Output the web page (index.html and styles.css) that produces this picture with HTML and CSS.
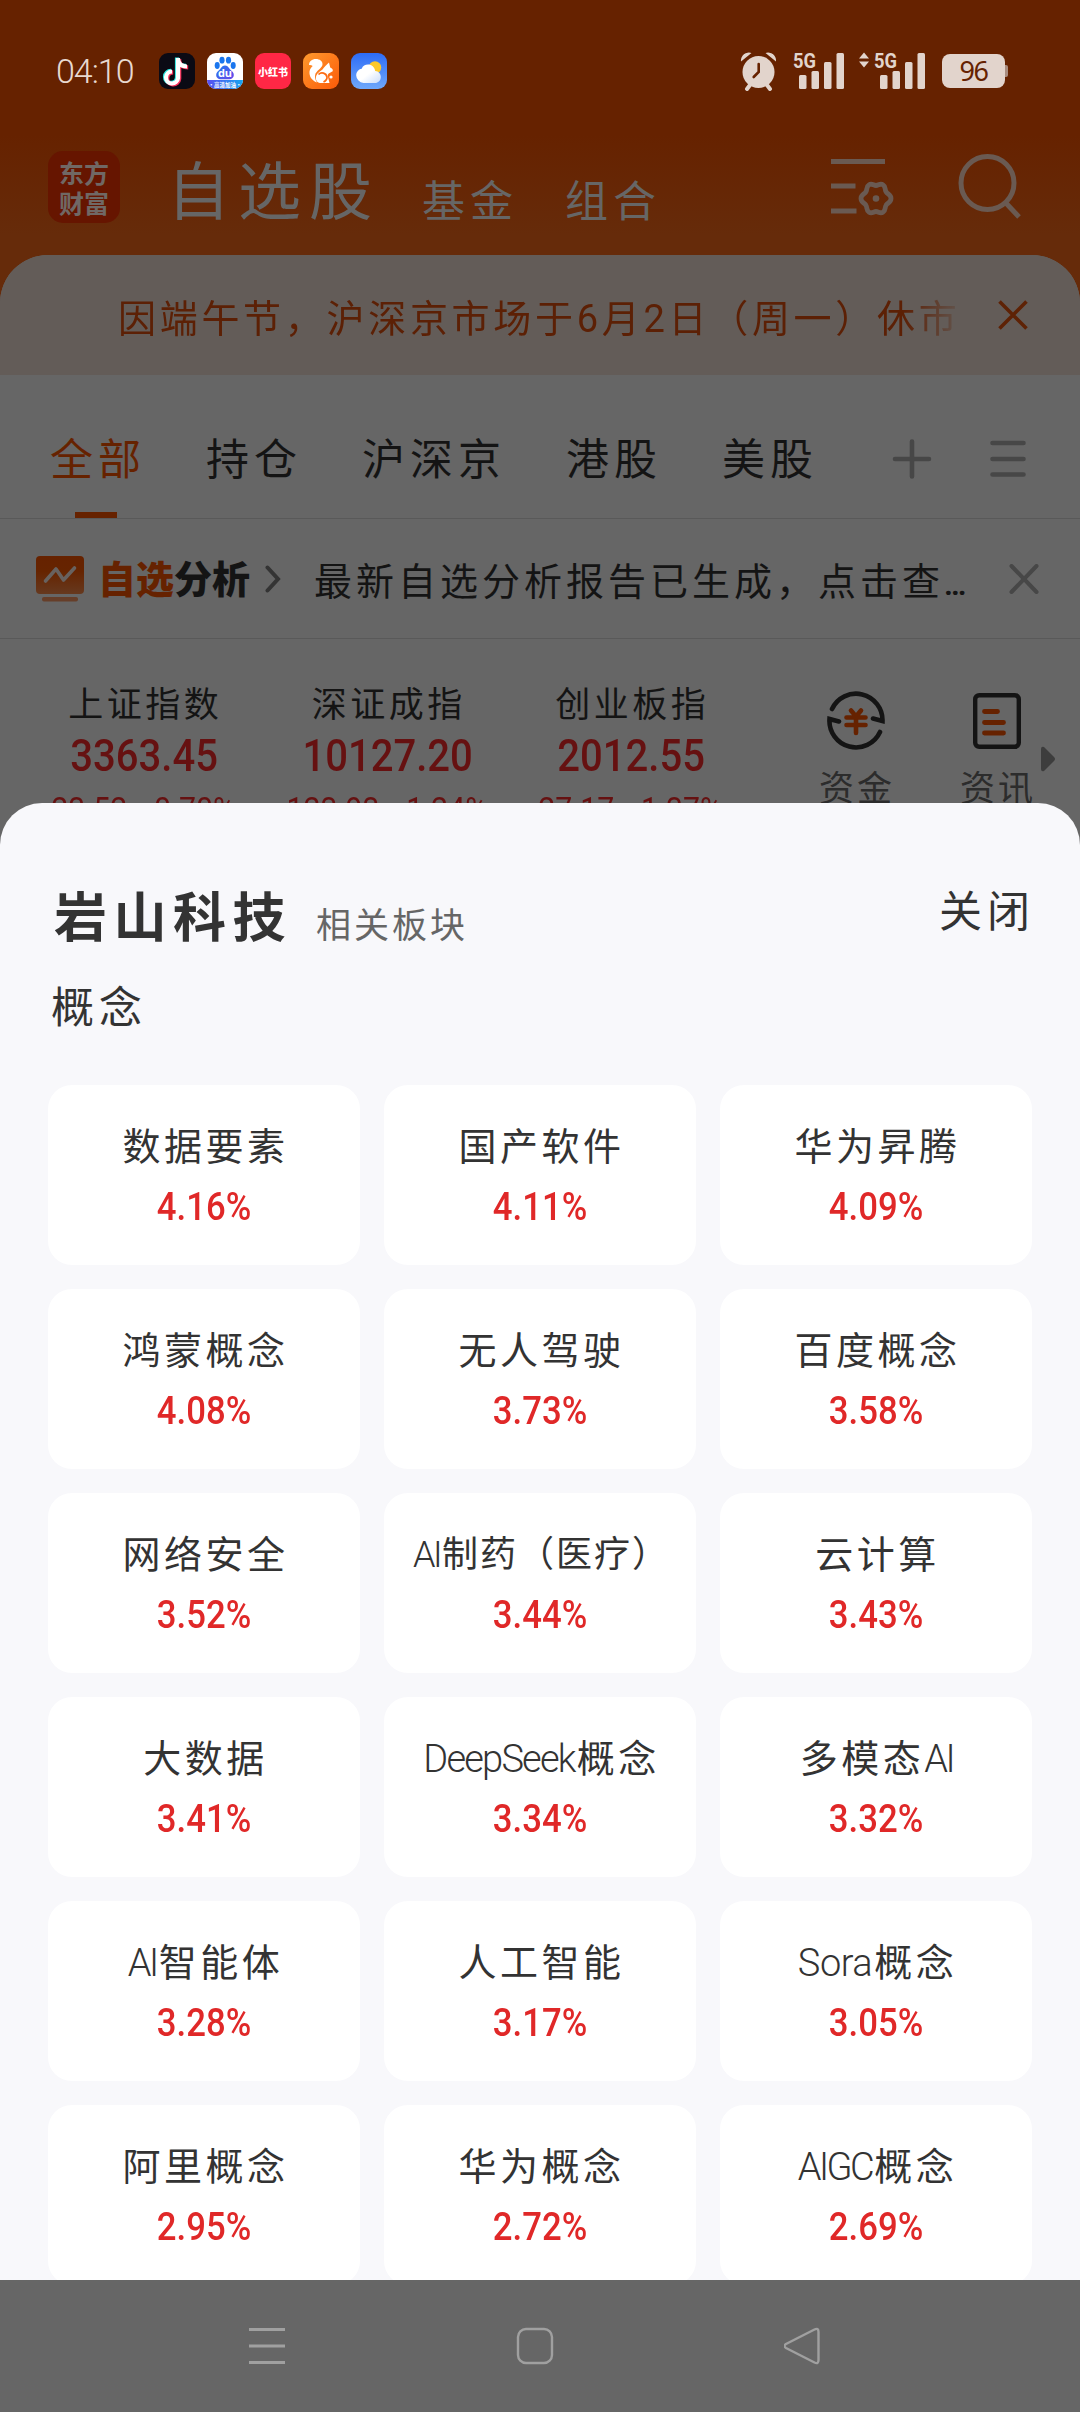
FILE: index.html
```html
<!DOCTYPE html>
<html lang="zh-CN">
<head>
<meta charset="utf-8">
<title>自选股</title>
<link rel="stylesheet" href="styles.css">
</head>
<body>
<div class="screen">
  <header class="top">
    <div class="status">
      <span class="clock">04:10</span>
      <div class="apps">
        <svg width="36" height="36" viewBox="0 0 36 36"><rect width="36" height="36" rx="9" fill="#0b0a14"/><g fill="none" stroke-width="4.2"><path d="M19 5v20a6 6 0 1 1-6-6.500M19 7c1 4 4.500 6.500 9 6.500" stroke="#2ee6e0" transform="translate(-1 -.6)"/><path d="M19 5v20a6 6 0 1 1-6-6.500M19 7c1 4 4.500 6.500 9 6.500" stroke="#f5315a" transform="translate(1.200 .9)"/><path d="M19 5v20a6 6 0 1 1-6-6.500M19 7c1 4 4.500 6.500 9 6.500" stroke="#fff"/></g></svg>
        <svg width="36" height="36" viewBox="0 0 36 36"><defs><linearGradient id="du" x1="0" y1="0" x2="1" y2="0"><stop offset="0" stop-color="#5a4df0"/><stop offset="1" stop-color="#16a6f2"/></linearGradient><linearGradient id="paw" x1="0" y1="0" x2="1" y2="1"><stop offset="0" stop-color="#1d7bf0"/><stop offset="1" stop-color="#6a45e8"/></linearGradient><clipPath id="rc"><rect width="36" height="36" rx="9"/></clipPath></defs><g clip-path="url(#rc)"><rect width="36" height="36" fill="#fff"/><rect y="27" width="36" height="9" fill="url(#du)"/></g><g fill="#1a76ee"><ellipse cx="10.200" cy="12.500" rx="2.500" ry="3.400"/><ellipse cx="15" cy="7.200" rx="2.600" ry="3.400"/><ellipse cx="21.500" cy="7.200" rx="2.600" ry="3.400"/><ellipse cx="26.200" cy="12.500" rx="2.500" ry="3.400"/></g><path d="M18 12.500c3.500 0 4 3.500 6.500 5.200 4 3 2.500 8.500-2 8.500h-9c-4.500 0-6-5.500-2-8.500 2.500-1.700 3-5.200 6.500-5.200z" fill="url(#paw)"/><text class="du" x="18" y="23.500">du</text><text class="slogan" x="18" y="33.500">·高清加油·</text></svg>
        <svg width="36" height="36" viewBox="0 0 36 36"><rect width="36" height="36" rx="9" fill="#ff2745"/><text class="red-note" x="18" y="22.500">小红书</text></svg>
        <svg width="36" height="36" viewBox="0 0 36 36"><defs><linearGradient id="uc" x1="0" y1="0" x2="1" y2="1"><stop offset="0" stop-color="#ff9a2e"/><stop offset="1" stop-color="#fb5a08"/></linearGradient></defs><rect width="36" height="36" rx="9" fill="url(#uc)"/><path d="M6 12c0-3.500 3-6 6.800-6 4 0 6.700 2.200 6.700 5.200 0 3.300-4.500 5.300-7 9.300-1 3-.5 6 1.500 9C8.500 27.500 6 23 6.500 18.500c.3-2.500 2-4.300 3.200-5.500-1.200-1-2.500-1.300-3.700-1z" fill="#fff"/><path d="M26 9.500l1.200 5c2 .8 3 2.200 2.500 3.700l-4 2.300c-1 1-1.200 2-.7 3.500l1.500 6H17c-3-.5-4.500-3-4-6 .5-3.500 4-5.500 6.500-7.500 1.500-2.500 4-4.500 6.500-7z" fill="#fff"/><path d="M15.500 21.500a5 5 0 0 1 8.500 2.500c.2 2.500-1.500 4-3.500 5" fill="none" stroke="#fd6c14" stroke-width="1.700"/><circle cx="28" cy="24" r="1.600" fill="#fff"/></svg>
        <svg width="36" height="36" viewBox="0 0 36 36"><defs><linearGradient id="sky" x1="0" y1="0" x2="0" y2="1"><stop offset="0" stop-color="#2d6cf6"/><stop offset="1" stop-color="#6fa8fb"/></linearGradient><linearGradient id="cloud" x1="0" y1="0" x2="1" y2="1"><stop offset=".5" stop-color="#fff"/><stop offset="1" stop-color="#c9dcfb"/></linearGradient></defs><rect width="36" height="36" rx="9" fill="url(#sky)"/><circle cx="24" cy="14.500" r="6.200" fill="#fcc92b"/><path d="M12.500 30a8 8 0 0 1-7.300-7.500c0-4 3-6.500 5.500-6.700 1-3 3.500-4.300 6.300-4.300 3.800 0 6.500 2.500 7.200 6.500 3.500.3 5.600 2.800 5.600 6 0 3.500-2.600 6-5.800 6z" fill="url(#cloud)"/></svg>
      </div>
      <div class="signals">
        <svg width="37" height="40" viewBox="0 0 37 40"><g fill="#e2d4cc"><circle cx="18.500" cy="21" r="16"/><path d="M1 10.500a8 8 0 0 1 10.500-8.500zM36 10.500a8 8 0 0 0-10.500-8.500z"/></g><path d="M10 34l-3 4M27 34l3 4" stroke="#e2d4cc" stroke-width="4" stroke-linecap="round"/><path d="M18.700 13v8l-5 5" stroke="#662200" stroke-width="2.600" fill="none" stroke-linecap="round"/></svg>
        <svg class="bars" width="52" height="52" viewBox="0 -6 52 52"><text class="net" x="0" y="16.500" textLength="23" lengthAdjust="spacingAndGlyphs">5G</text><g fill="#e2d4cc"><rect x="6" y="24" width="7.500" height="14" rx="1.500"/><rect x="18.500" y="20" width="7.500" height="18" rx="1.500"/><rect x="31" y="11" width="7.500" height="27" rx="1.500"/><rect x="43.500" y="2" width="7.500" height="36" rx="1.500"/></g></svg>
        <svg class="bars two" width="67" height="52" viewBox="0 -6 67 52"><path d="M0 7.500l5-6 5 6zM0 10.500l5 6 5-6z" fill="#e2d4cc"/><text class="net" x="15" y="16.500" textLength="23" lengthAdjust="spacingAndGlyphs">5G</text><g fill="#e2d4cc"><rect x="21" y="24" width="7.500" height="14" rx="1.500"/><rect x="33.500" y="20" width="7.500" height="18" rx="1.500"/><rect x="46" y="11" width="7.500" height="27" rx="1.500"/><rect x="58.500" y="2" width="7.500" height="36" rx="1.500"/></g></svg>
        <span class="battery">96</span><i class="nub"></i>
      </div>
    </div>
    <div class="title-bar">
      <div class="logo"><span>东方</span><span>财富</span></div>
      <h1 class="title">自选股</h1>
      <span class="sub-title fund">基金</span>
      <span class="sub-title">组合</span>
      <div class="title-icons">
        <svg width="64" height="64" viewBox="0 0 64 64" fill="none" stroke="#6a5a52" stroke-width="4.800"><path d="M0 9.500h54M0 34h24.500M0 59h25.500"/><path d="M45 33.500C47.500 33.500 49 31 52 32.800C55 34.500 53.500 37.500 55.200 40C57 42.500 60 42.500 60 46.500C60 50.500 57 50.500 55.200 53C53.500 55.500 55 58.500 52 60.200C49 62 47.500 59.500 45 59.500C42.500 59.500 41 62 38 60.200C35 58.500 36.500 55.500 34.800 53C33 50.500 30 50.500 30 46.500C30 42.500 33 42.500 34.800 40C36.500 37.500 35 34.500 38 32.800C41 31 42.500 33.500 45 33.500z"/><circle cx="45" cy="46.500" r="3.300" fill="#6a5a52" stroke="none"/></svg>
        <svg width="64" height="68" viewBox="0 0 64 68" fill="none" stroke="#6a5a52" stroke-width="5"><circle cx="29.500" cy="31" r="26.500"/><path d="M47 50l14 15"/></svg>
      </div>
    </div>
  </header>

  <main class="content">
    <div class="notice">
      <span class="notice-text">因端午节，沪深京市场于6月2日（周一）休市</span>
      <svg width="30" height="30" viewBox="0 0 30 30" stroke="#5e2205" stroke-width="3.600"><path d="M1.500 1.500l27 27M28.500 1.500l-27 27"/></svg>
    </div>
    <nav class="tabs">
      <span class="tab active">全部</span><span class="tab">持仓</span><span class="tab">沪深京</span><span class="tab">港股</span><span class="tab">美股</span>
      <svg class="plus" width="40" height="40" viewBox="0 0 40 40" stroke="#474747" stroke-width="4.600" stroke-linecap="round"><path d="M3 20h34M20 2.500v35"/></svg>
      <svg width="36" height="40" viewBox="0 0 36 40" stroke="#474747" stroke-width="4.600" stroke-linecap="round"><path d="M2.500 4h31M2.500 20h31M2.500 35.500h31"/></svg>
    </nav>
    <div class="report">
      <svg width="48" height="46" viewBox="0 0 48 46"><defs><linearGradient id="rp" x1="0" y1="0" x2="0" y2="1"><stop offset="0" stop-color="#662200"/><stop offset=".4" stop-color="#662400"/><stop offset="1" stop-color="#66391f"/></linearGradient></defs><rect width="48" height="38" rx="4" fill="url(#rp)"/><rect x="6" y="41" width="36" height="4.500" rx="2" fill="#663e29"/><path d="M9.500 25l10.500-12 7.500 11 11-12" fill="none" stroke="#68625f" stroke-width="3.600" stroke-linecap="round" stroke-linejoin="round"/></svg>
      <strong class="report-name"><b>自选</b>分析</strong>
      <svg class="chevron" width="16" height="28" viewBox="0 0 16 28" fill="none" stroke="#343434" stroke-width="4" stroke-linecap="round"><path d="M2.500 2.500L13 14 2.500 25.500"/></svg>
      <span class="report-text">最新自选分析报告已生成，点击查<em>…</em></span>
      <svg width="30" height="30" viewBox="0 0 30 30" stroke="#474747" stroke-width="4" stroke-linecap="round"><path d="M2.500 2l25 26M27.500 2l-25 26"/></svg>
    </div>
    <section class="indices">
      <div class="index"><span>上证指数</span><strong>3363.45</strong><p><i>23.52</i><i>0.70%</i></p></div>
      <div class="index"><span>深证成指</span><strong>10127.20</strong><p><i>123.93</i><i>1.24%</i></p></div>
      <div class="index"><span>创业板指</span><strong>2012.55</strong><p><i>27.17</i><i>1.37%</i></p></div>
      <div class="tool money">
        <svg width="62" height="62" viewBox="0 0 62 62" fill="none" stroke="#141414" stroke-width="4.600" stroke-linecap="round"><path d="M7 20A26.500 26.500 0 0 1 57.500 32L48 29.500M55 43A26.500 26.500 0 0 1 4.500 30L14 32.500"/><path d="M26 21.500l5 6 5-6M21.500 28.500h19M21.500 36h19M31 28v16" stroke="#662200"/></svg>
        <span>资金</span>
      </div>
      <div class="tool news">
        <svg width="48" height="62" viewBox="0 0 48 62" fill="none" stroke="#141414" stroke-width="4.400"><rect x="2.200" y="6.200" width="43.600" height="51.600" rx="4"/><path d="M11.500 22.500h13M11.500 33.500h19M11.500 44h19" stroke="#662200" stroke-width="4.800" stroke-linecap="round"/></svg>
        <span>资讯</span>
      </div>
      <svg class="more" width="16" height="26" viewBox="0 0 16 26"><path d="M1 3q0-3 3-2L14 11q2 2 0 4L4 25q-3 1-3-2z" fill="#3d3d3d"/></svg>
    </section>
  </main>

  <section class="sheet">
    <div class="sheet-head">
      <h2>岩山科技</h2><span class="related">相关板块</span><span class="close">关闭</span>
    </div>
    <h3 class="group">概念</h3>
    <div class="grid">
      <div class="card"><span>数据要素</span><strong>4.16%</strong></div>
      <div class="card"><span>国产软件</span><strong>4.11%</strong></div>
      <div class="card"><span>华为昇腾</span><strong>4.09%</strong></div>
      <div class="card"><span>鸿蒙概念</span><strong>4.08%</strong></div>
      <div class="card"><span>无人驾驶</span><strong>3.73%</strong></div>
      <div class="card"><span>百度概念</span><strong>3.58%</strong></div>
      <div class="card"><span>网络安全</span><strong>3.52%</strong></div>
      <div class="card long"><span><i>AI</i>制药（医疗）</span><strong>3.44%</strong></div>
      <div class="card"><span>云计算</span><strong>3.43%</strong></div>
      <div class="card"><span>大数据</span><strong>3.41%</strong></div>
      <div class="card"><span><i class="name">DeepSeek</i>概念</span><strong>3.34%</strong></div>
      <div class="card"><span>多模态<i>AI</i></span><strong>3.32%</strong></div>
      <div class="card"><span><i>AI</i>智能体</span><strong>3.28%</strong></div>
      <div class="card"><span>人工智能</span><strong>3.17%</strong></div>
      <div class="card"><span><i class="wide">Sora</i>概念</span><strong>3.05%</strong></div>
      <div class="card"><span>阿里概念</span><strong>2.95%</strong></div>
      <div class="card"><span>华为概念</span><strong>2.72%</strong></div>
      <div class="card"><span><i>AIGC</i>概念</span><strong>2.69%</strong></div>
    </div>
  </section>

  <footer class="nav">
    <svg width="38" height="40" viewBox="0 0 38 40" stroke="#a0a0a0" stroke-width="2.800"><path d="M1 3.500h36M1 20h36M1 36.500h36"/></svg>
    <svg width="38" height="40" viewBox="0 0 38 40" fill="none" stroke="#a0a0a0" stroke-width="2.400"><rect x="2" y="3" width="34" height="34" rx="8"/></svg>
    <svg width="38" height="40" viewBox="0 0 38 40" fill="none" stroke="#a0a0a0" stroke-width="2.400"><path d="M30 3.500Q34 1.500 34 6v28q0 4.500-4 2.500L1.500 22q-3-2 0-4z" transform="translate(.5 0)"/></svg>
  </footer>
</div>
</body>
</html>
```
FILE: styles.css
```css
* { box-sizing: border-box; margin: 0; padding: 0; }
i, em { font-style: normal; }
svg { flex: none; display: block; }
body { background: #666; }

.screen {
  position: relative;
  width: 1080px;
  height: 2412px;
  overflow: hidden;
  background: #666;
  color: #141414;
  font-family: Roboto, "Noto Sans CJK SC", sans-serif;
  white-space: nowrap;
}

/* status bar and page title */
.top { height: 303px; background: linear-gradient(#662200 0, #662200 135px, #662b0a 235px); }
.status { display: flex; height: 142px; padding-left: 56px; align-items: center; }
.clock { width: 103px; font-size: 34px; font-weight: 300; letter-spacing: -1px; color: #e8d9d0; }
.apps { display: flex; gap: 12px; width: 581px; }
.du { font: 700 11px "Open Sans", sans-serif; fill: #fff; text-anchor: middle; }
.slogan { font: 700 5.500px "Noto Sans CJK SC", sans-serif; fill: #fff; text-anchor: middle; }
.red-note { font: 900 10px "Noto Sans CJK SC", sans-serif; fill: #fff; text-anchor: middle; }
.net { font: 700 21px Roboto, sans-serif; fill: #e2d4cc; }
.signals { display: flex; align-items: center; }
.bars { margin-left: 16px; }
.bars.two { margin-left: 14px; }
.battery {
  width: 63px; height: 34px; margin-left: 16px; border-radius: 8px;
  background: #e2d4cc; color: #662200;
  font: 27px/33px "Noto Sans", sans-serif; letter-spacing: -1.500px; text-align: center;
}
.nub { width: 3px; height: 12px; border-radius: 0 2px 2px 0; background: #a98d80; }

.title-bar { display: flex; height: 104px; padding-left: 48px; align-items: center; color: #666; }
.logo {
  display: flex; flex-direction: column; align-items: center; justify-content: center;
  width: 72px; height: 72px; margin-top: -14px; border-radius: 15px; background: #661500;
  font: 700 25px/30px "Noto Sans CJK SC", sans-serif; color: #706865;
}
.title { width: 253px; margin: -2px 0 0 47px; font-size: 63px; line-height: 80px; font-weight: 400; letter-spacing: 8px; }
.sub-title { width: 143px; margin-top: 16px; font-size: 43px; line-height: 60px; letter-spacing: 5px; }
.sub-title.fund { margin-left: 2px; }
.title-icons { display: flex; gap: 63px; margin: -16px 0 0 123px; }

/* page content */
.content { position: relative; height: 2026px; margin-top: -48px; border-radius: 48px 48px 0 0; background: #666; overflow: hidden; }
.notice { display: flex; height: 120px; padding: 0 52px 0 118px; align-items: center; justify-content: space-between; background: #635c58; }
.notice-text {
  width: 838px; margin-top: 0; color: #5c2005;
  font-size: 38px; letter-spacing: 3.700px;
  -webkit-mask-image: linear-gradient(90deg, #000 785px, transparent 850px);
  mask-image: linear-gradient(90deg, #000 785px, transparent 850px);
}
.tabs { display: flex; height: 144px; padding: 24px 53px 0 50px; gap: 60px; border-bottom: 1px solid #595959; }
.tab { height: 119px; padding-top: 28px; font-size: 43px; line-height: 66px; letter-spacing: 5px; }
.tab.active { color: #662200; background: linear-gradient(#662200, #662200) 25px 113px / 42px 6px no-repeat; }
.tabs svg { margin-top: 40px; }
.tabs .plus { margin-left: 14px; margin-right: -2px; }
.report { display: flex; height: 120px; padding: 0 41px 0 36px; align-items: center; border-bottom: 1px solid #595959; }
.report-name { margin: -4px 0 0 14px; font-size: 38px; font-weight: 900; }
.report-name b { color: #662200; font-weight: 900; }
.chevron { margin-left: 15px; }
.report-text { width: 696px; margin-left: 33px; font-size: 38px; letter-spacing: 4px; }
.report-text em { letter-spacing: 0; font-size: 30px; font-weight: 700; }
.indices { display: flex; padding-left: 22px; }
.index { display: flex; flex-direction: column; align-items: center; width: 243.500px; padding-top: 40px; }
.index span { height: 52px; font-size: 35px; line-height: 54px; letter-spacing: 3.500px; padding-left: 3px; }
.index strong { height: 48px; font-size: 44px; line-height: 50px; font-weight: 500; color: #661111; transform: scaleX(.91); }
.index p { display: flex; gap: 30px; padding-top: 9px; font-size: 34px; line-height: 42px; font-weight: 400; color: #661111; transform: scaleX(.89); }
.tool { display: flex; flex-direction: column; align-items: center; padding-top: 50px; color: #2c2c2c; }
.tool span { margin-top: 13px; padding-left: 3px; font-size: 35px; line-height: 52px; letter-spacing: 3px; }
.money { width: 78px; margin-left: 64px; }
.news { width: 78px; margin-left: 63px; }
.more { margin: 107px 0 0 4px; }

/* related boards sheet, over the page */
.sheet {
  position: absolute; left: 0; top: 803px; width: 1080px; height: 1477px;
  overflow: hidden; border-radius: 42px 42px 0 0; background: #f8f8fb; color: #333;
}
.sheet-head { display: flex; height: 170px; padding: 78px 49px 0 54px; }
.sheet-head h2 { width: 262px; font-size: 53px; line-height: 76px; letter-spacing: 6.500px; font-weight: 700; }
.related { margin-top: 16px; font-size: 35px; line-height: 60px; letter-spacing: 3px; color: #666; }
.close { margin-left: auto; font-size: 43px; line-height: 62px; letter-spacing: 5px; margin-right: -4px; }
.group { height: 112px; padding-left: 51px; font-size: 43px; line-height: 71px; letter-spacing: 5px; font-weight: 400; }
.grid { display: grid; grid-template-columns: repeat(3, 312px); grid-auto-rows: 180px; gap: 24px; padding-left: 48px; }
.card { display: flex; flex-direction: column; align-items: center; padding-top: 33px; border-radius: 24px; background: #fff; }
.card span { height: 59px; padding-left: 3px; font-size: 38px; line-height: 59px; letter-spacing: 3.500px; }
.card span i { font-weight: 300; letter-spacing: -2.500px; padding-right: 2px; }
.card span i.name { letter-spacing: -1.800px; }
.card span i.wide { letter-spacing: -.5px; }
.card.long span { font-size: 36px; letter-spacing: 2px; }
.card strong { font-size: 39px; line-height: 60px; font-weight: 500; color: #e02828; transform: scaleX(.89); }

/* system navigation */
.nav { position: absolute; left: 0; top: 2280px; display: flex; gap: 230px; width: 1080px; height: 132px; padding: 46px 0 0 248px; background: #666; }
```
